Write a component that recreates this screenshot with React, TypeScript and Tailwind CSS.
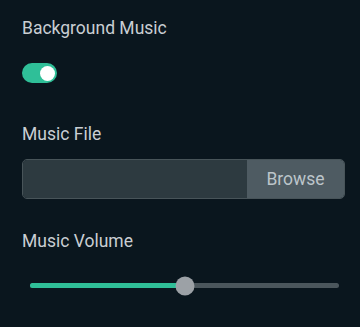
import { useState } from 'react';

function Toggle({ on, onChange }: { on: boolean; onChange: () => void }) {
  return (
    <button
      onClick={onChange}
      className={`relative w-[35px] h-[20px] rounded-full ${on ? 'bg-[#2fbf98]' : 'bg-[#4b565c]'}`}
    >
      <span
        className={`absolute top-[2.5px] w-[15px] h-[15px] rounded-full bg-white ${on ? 'left-[18px]' : 'left-[2px]'}`}
      />
    </button>
  );
}

export default function App() {
  const [music, setMusic] = useState(true);
  const volume = 50;

  return (
    <div
      className="w-[360px] h-[327px] bg-[#0a161e] text-[#c9ced3] px-[22px] pt-[16px]"
      style={{ fontFamily: 'Roboto, "Noto Sans", sans-serif' }}
    >
      {/* Background music toggle */}
      <div className="text-[17.5px] leading-[24px]">Background Music</div>
      <div className="mt-[23px] flex">
        <Toggle on={music} onChange={() => setMusic(!music)} />
      </div>

      {/* Music file */}
      <div className="mt-[39px] text-[17.5px] leading-[24px]">Music File</div>
      <div className="mt-[13px] flex h-[40px] w-[323px] rounded-[5px] border border-[#485459] overflow-hidden">
        <input className="flex-1 min-w-0 bg-[#2d3a40] outline-none px-3 text-[15px]" />
        <button className="w-[97px] bg-[#4e5b62] text-[#bcc5ca] text-[17.5px]">Browse</button>
      </div>

      {/* Volume */}
      <div className="mt-[30px] text-[17.5px] leading-[24px]">Music Volume</div>
      <div className="mt-[30px] ml-[8px] w-[309px]">
        <div className="relative h-[5px] w-full rounded-full bg-[#4b565c]">
          <div className="h-full rounded-full bg-[#2fbf98]" style={{ width: `${volume}%` }} />
          <div
            className="absolute top-1/2 w-[19px] h-[19px] -translate-x-1/2 -translate-y-1/2 rounded-full bg-[#9ca1a6]"
            style={{ left: `${volume}%` }}
          />
        </div>
      </div>
    </div>
  );
}
